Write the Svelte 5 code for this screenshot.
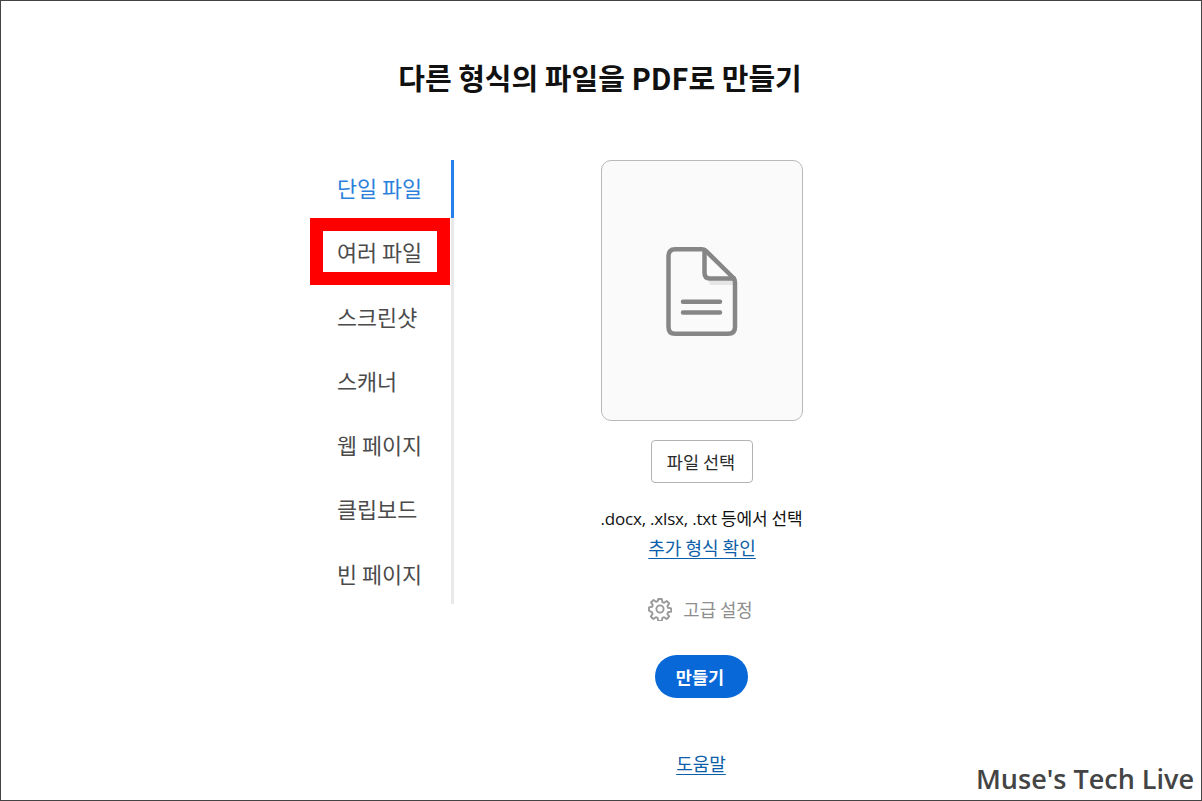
<script>
  const tabs = ["단일 파일", "여러 파일", "스크린샷", "스캐너", "웹 페이지", "클립보드", "빈 페이지"];
  let active = 0;
  let marked = 1;
</script>

<div class="page">
  <h1>다른 형식의 파일을 PDF로 만들기</h1>

  <div class="layout">
    <nav class="tabs">
      {#each tabs as tab, i}
        <div class="tab" class:active={i === active}>
          {tab}
          {#if i === marked}<span class="mark"></span>{/if}
        </div>
      {/each}
    </nav>

    <section class="panel">
      <div class="drop">
        <svg width="73" height="91" viewBox="0 0 73 91" fill="none" stroke="#868686" stroke-width="4.500" stroke-linejoin="round" stroke-linecap="round">
          <path d="M42 34h26v5H44z" fill="#e6e6e6" stroke="none" />
          <path d="M9 3.200h27c2 0 3 .6 4.200 2L67 31.500c1.400 1.500 2 2.500 2 4.500V81c0 4.500-2.500 6.800-7 6.800H9c-4.500 0-6.500-2.300-6.500-6.800V10c0-4.500 2-6.800 6.500-6.800z" />
          <path d="M38.500 4v23c0 3.500 1.800 5.500 5.500 5.500H68" />
          <path d="M17 55.700h37M17 66.500h37" />
        </svg>
      </div>

      <button class="choose">파일 선택</button>

      <p class="hint">.docx, .xlsx, .txt 등에서 선택</p>
      <a class="more" href="#more">추가 형식 확인</a>

      <div class="advanced">
        <svg width="24" height="24" viewBox="0 0 24 24" fill="none" stroke="#9a9a9a" stroke-width="1.900" stroke-linejoin="round">
          <circle cx="12" cy="12" r="3.600" />
          <path d="M10.200 2h3.600l.6 3.100 1.700.7 2.600-1.800 2.500 2.500-1.800 2.600.7 1.700 3.100.6v3.200l-3.100.6-.7 1.700 1.800 2.600-2.500 2.500-2.600-1.800-1.700.7-.6 3.100h-3.600l-.6-3.100-1.700-.7-2.600 1.800-2.500-2.500 1.800-2.600-.7-1.700L1 13.600v-3.200l3.100-.6.7-1.700L3 5.500 5.500 3l2.600 1.800 1.700-.7z" />
        </svg>
        <span>고급 설정</span>
      </div>

      <button class="create">만들기</button>

      <a class="help" href="#help">도움말</a>
    </section>
  </div>

  <div class="credit">Muse's Tech Live</div>
</div>

<style>
  :global(body) {
    margin: 0;
    background: #fff;
  }

  .page {
    position: relative;
    box-sizing: border-box;
    width: 1202px;
    height: 801px;
    border: 1px solid #444;
    overflow: hidden;
    font-family: "Noto Sans CJK KR", "Noto Sans", sans-serif;
    color: #222;
  }

  h1 {
    margin: 0;
    padding: 55px 2px 0 0;
    height: 104px;
    box-sizing: border-box;
    text-align: center;
    font-size: 29px;
    line-height: 42px;
    font-weight: 700;
    color: #111;
  }

  .layout {
    display: flex;
    align-items: flex-start;
    padding-top: 55px;
    padding-left: 336px;
  }

  .tabs {
    width: 114px;
    display: flex;
    flex-direction: column;
    gap: 6.300px;
    border-right: 3px solid #e9e9e9;
  }

  .tab {
    position: relative;
    height: 58px;
    line-height: 56px;
    font-size: 21.800px;
    color: #4b4b4b;
    white-space: nowrap;
  }

  .tab.active {
    color: #2c7fdb;
  }

  .tab.active::after {
    content: "";
    position: absolute;
    top: 0;
    right: -3px;
    width: 3px;
    height: 100%;
    background: #2680eb;
  }

  .mark {
    position: absolute;
    box-sizing: border-box;
    left: -27px;
    top: -6px;
    width: 140px;
    height: 67px;
    border: 13px solid #fe0000;
    pointer-events: none;
  }

  .panel {
    width: 300px;
    margin-left: 98px;
    display: flex;
    flex-direction: column;
    align-items: center;
  }

  .drop {
    box-sizing: border-box;
    width: 202px;
    height: 261px;
    background: #fafafa;
    border: 1.500px solid #b8b8b8;
    border-radius: 10px;
    display: flex;
    align-items: center;
    justify-content: center;
    padding-top: 1px;
  }

  .choose {
    box-sizing: border-box;
    width: 102px;
    height: 43px;
    margin-top: 19px;
    background: #fff;
    border: 1.500px solid #b3b3b3;
    border-radius: 4px;
    font-family: inherit;
    font-size: 17.500px;
    color: #2c2c2c;
    padding: 0 2px 0 0;
  }

  .hint {
    margin: 23px 1px 0 0;
    font-size: 17px;
    line-height: 26px;
    color: #111;
    font-family: "Open Sans", "Noto Sans CJK KR", sans-serif;
    letter-spacing: -0.2px;
    white-space: nowrap;
  }

  .more,
  .help {
    font-size: 18px;
    line-height: 26px;
    color: #0d5ea8;
    text-decoration: underline;
    text-underline-offset: 3px;
  }

  .more {
    margin-top: 2px;
  }

  .advanced {
    display: flex;
    align-items: center;
    gap: 11px;
    margin-top: 36px;
    height: 26px;
    font-size: 17.800px;
    color: #8e8e8e;
    margin-right: 3px;
  }

  .create {
    box-sizing: border-box;
    width: 93px;
    height: 43px;
    margin: 33px 2px 0 0;
    background: #0868d8;
    border: none;
    border-radius: 22px;
    color: #fff;
    font-family: inherit;
    font-size: 17.500px;
    font-weight: 700;
    padding: 0 2px 0 0;
  }

  .help {
    margin: 52px 2px 0 0;
  }

  .credit {
    position: absolute;
    right: 7px;
    bottom: 4px;
    font-family: "Open Sans", sans-serif;
    font-size: 27px;
    line-height: 34px;
    font-weight: 600;
    color: #444;
  }
</style>
